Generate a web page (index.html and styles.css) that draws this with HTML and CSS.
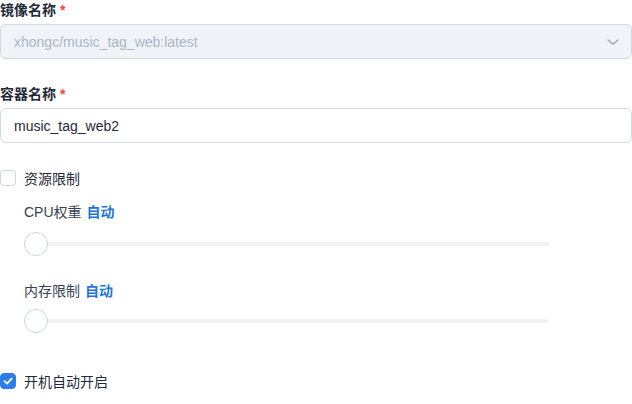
FILE: index.html
```html
<!DOCTYPE html>
<html lang="zh">
<head>
<meta charset="utf-8">
<link rel="stylesheet" href="styles.css">
</head>
<body>
<div class="form">
  <div class="field first">
    <div class="label">镜像名称 <span class="req">*</span></div>
    <div class="control disabled">
      <span class="value">xhongc/music_tag_web:latest</span>
      <svg class="chev" width="14" height="14" viewBox="0 0 14 14"><path d="M2.2 5 L7 9.2 L11.8 5" fill="none" stroke="#9aa8bd" stroke-width="1.5" stroke-linecap="round" stroke-linejoin="round"/></svg>
    </div>
  </div>
  <div class="field second">
    <div class="label">容器名称 <span class="req">*</span></div>
    <div class="control">
      <span class="value">music_tag_web2</span>
    </div>
  </div>
  <label class="check">
    <span class="box"></span>
    <span class="check-text">资源限制</span>
  </label>
  <div class="limits">
    <div class="limit cpu">
      <div class="limit-label">CPU权重 <span class="auto">自动</span></div>
      <div class="slider"><div class="track"></div><div class="thumb"></div></div>
    </div>
    <div class="limit">
      <div class="limit-label">内存限制 <span class="auto">自动</span></div>
      <div class="slider"><div class="track"></div><div class="thumb"></div></div>
    </div>
  </div>
  <label class="check">
    <span class="box checked"><svg width="12" height="12" viewBox="0 0 12 12"><path d="M2.5 6.2 L5 8.6 L9.6 3.6" fill="none" stroke="#fff" stroke-width="1.8" stroke-linecap="round" stroke-linejoin="round"/></svg></span>
    <span class="check-text">开机自动开启</span>
  </label>
</div>
</body>
</html>
```
FILE: styles.css
```css
html, body {
  margin: 0;
  padding: 0;
  background: #ffffff;
}
body {
  font-family: "Liberation Sans", "Noto Sans CJK SC", sans-serif;
  color: #1f2937;
}
.form {
  width: 632px;
  display: flex;
  flex-direction: column;
}
.field {
  display: flex;
  flex-direction: column;
}
.field.first { margin-bottom: 25px; }
.field.second { margin-bottom: 27px; }
.label {
  font-size: 14px;
  font-weight: 700;
  line-height: 20px;
  height: 20px;
  margin-bottom: 4px;
  color: #1f2937;
}
.req {
  color: #ef4444;
  font-weight: 700;
}
.control {
  height: 35px;
  box-sizing: border-box;
  border: 1px solid #d1d9e4;
  border-radius: 6px;
  display: flex;
  align-items: center;
  justify-content: space-between;
  padding: 0 11px 0 13px;
  font-size: 14px;
  color: #1f2937;
  background: #ffffff;
}
.control.disabled {
  background: #f0f3f8;
  color: #aab6c6;
}
.chev {
  display: block;
}
.check {
  display: flex;
  align-items: center;
  gap: 8px;
  height: 16px;
  font-size: 14px;
  color: #1f2937;
}
.box {
  width: 16px;
  height: 16px;
  box-sizing: border-box;
  border: 1px solid #cbd5e1;
  border-radius: 4px;
  display: flex;
  align-items: center;
  justify-content: center;
  background: #fff;
}
.box.checked {
  background: #2b7de9;
  border-color: #2b7de9;
}
.box svg { display: block; }
.limits {
  padding-left: 24px;
  display: flex;
  flex-direction: column;
  gap: 25px;
  margin-top: 16px;
  margin-bottom: 40px;
}
.limit {
  display: flex;
  flex-direction: column;
  gap: 8px;
}
.limit.cpu { gap: 10px; }
.limit-label {
  font-size: 14px;
  line-height: 20px;
  color: #374151;
}
.auto {
  color: #1d74e0;
  font-weight: 700;
  margin-left: 1px;
}
.slider {
  position: relative;
  width: 525px;
  height: 24px;
  display: flex;
  align-items: center;
}
.track {
  width: 100%;
  height: 4px;
  border-radius: 2px;
  background: #f0f2f5;
}
.thumb {
  position: absolute;
  left: 0;
  top: 0;
  width: 24px;
  height: 24px;
  box-sizing: border-box;
  border: 1px solid #cdd5e0;
  border-radius: 50%;
  background: #fff;
}
```
